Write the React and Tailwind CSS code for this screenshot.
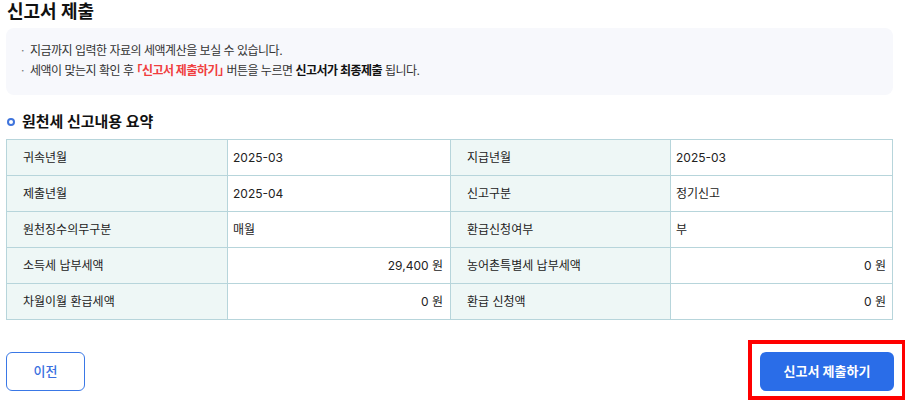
import React from "react";

const rows = [
  ["귀속년월", "2025-03", false, "지급년월", "2025-03", false],
  ["제출년월", "2025-04", false, "신고구분", "정기신고", false],
  ["원천징수의무구분", "매월", false, "환급신청여부", "부", false],
  ["소득세 납부세액", "29,400 원", true, "농어촌특별세 납부세액", "0 원", true],
  ["차월이월 환급세액", "0 원", true, "환급 신청액", "0 원", true],
];

export default function App() {
  return (
    <div
      className="w-[905px] h-[407px] overflow-hidden bg-white text-[#222]"
      style={{ fontFamily: 'Inter, "Noto Sans CJK KR", sans-serif' }}
    >
      <div className="pl-[6px] w-[893px]">
        <h1 className="text-[18px] font-bold leading-[22px] pt-[1px] pl-[1px] text-[#111]">신고서 제출</h1>
        <div className="mt-[5px] h-[67px] rounded-[8px] bg-[#f7f8fc] pt-[13px] pl-[15px] text-[12px] leading-[20px] text-[#333] tracking-[-0.5px]">
          <div className="flex">
            <span className="w-[9px] text-[#777]">·</span>
            <span>지금까지 입력한 자료의 세액계산을 보실 수 있습니다.</span>
          </div>
          <div className="flex">
            <span className="w-[9px] text-[#777]">·</span>
            <span>
              세액이 맞는지 확인 후{" "}
              <b className="text-[#f03e3e] font-bold [font-feature-settings:'halt']">「신고서 제출하기」</b> 버튼을 누르면{" "}
              <b className="text-[#111] font-bold">신고서가 최종제출</b> 됩니다.
            </span>
          </div>
        </div>

        <div className="mt-[15px] flex items-center h-[24px]">
          <span className="ml-[1px] w-[8px] h-[8px] rounded-full border-2 border-[#3f74dc]"></span>
          <span className="ml-[7px] text-[15px] font-bold text-[#111]">원천세 신고내용 요약</span>
        </div>

        <div className="mt-[5px] border border-[#b7d5db] text-[12px]">
          {rows.map((r, i) => (
            <div key={i} className={`grid grid-cols-[221px_223px_220px_221px] ${i > 0 ? "h-[36px] border-t border-[#b7d5db]" : "h-[35px]"}`}>
              <div className="bg-[#eef7f6] flex items-center pl-[16px] border-r border-[#b7d5db]">{r[0]}</div>
              <div className={`flex items-center border-r border-[#b7d5db] ${r[2] ? "justify-end pr-[7px]" : "pl-[5px]"}`}>{r[1]}</div>
              <div className="bg-[#eef7f6] flex items-center pl-[16px] border-r border-[#b7d5db]">{r[3]}</div>
              <div className={`flex items-center ${r[5] ? "justify-end pr-[6px]" : "pl-[5px]"}`}>{r[4]}</div>
            </div>
          ))}
        </div>

        <div className="mt-[32px] flex justify-between">
          <button className="w-[79px] h-[39px] rounded-[6px] border border-[#3a78e6] text-[#3a6fe0] text-[13px] font-medium bg-white">
            이전
          </button>
          <div className="relative mr-[-1px]">
            <button className="w-[134px] h-[39px] rounded-[6px] bg-[#2a6de8] text-white text-[13px] font-bold">
              신고서 제출하기
            </button>
            <div className="absolute left-[-12px] right-[-12px] top-[-12px] bottom-[-9px] border-4 border-[#ff0000] pointer-events-none"></div>
          </div>
        </div>
      </div>
    </div>
  );
}
